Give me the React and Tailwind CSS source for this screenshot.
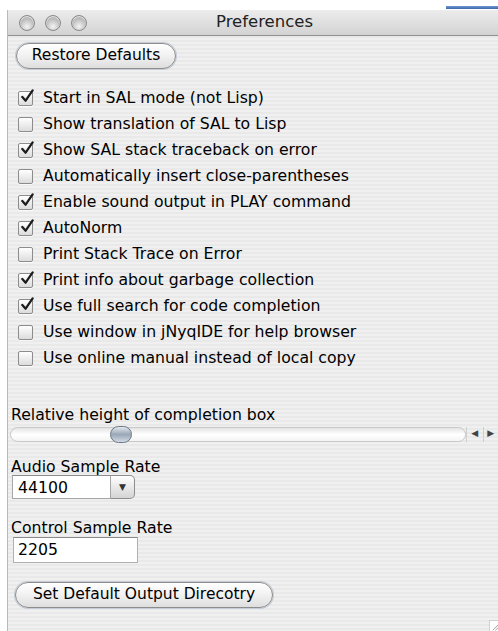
import React, { useState } from "react";

const options = [
  { label: "Start in SAL mode (not Lisp)", on: true },
  { label: "Show translation of SAL to Lisp", on: false },
  { label: "Show SAL stack traceback on error", on: true },
  { label: "Automatically insert close-parentheses", on: false },
  { label: "Enable sound output in PLAY command", on: true },
  { label: "AutoNorm", on: true },
  { label: "Print Stack Trace on Error", on: false },
  { label: "Print info about garbage collection", on: true },
  { label: "Use full search for code completion", on: true },
  { label: "Use window in jNyqIDE for help browser", on: false },
  { label: "Use online manual instead of local copy", on: false },
];

const TrafficLight = () => (
  <span className="block w-4 h-4 rounded-full border border-[#8a8a8a] bg-[radial-gradient(circle_at_50%_75%,#f4f4f4_0%,#c9c9c9_45%,#9c9c9c_100%)] shadow-[inset_0_1px_1px_rgba(255,255,255,0.8)]" />
);

const Checkbox = ({ checked, onChange }) => (
  <button
    onClick={onChange}
    className="relative w-[15px] h-[15px] shrink-0 rounded-[2px] border border-[#8c8c8c] bg-gradient-to-b from-[#ffffff] to-[#dcdcdc] shadow-[0_1px_0_rgba(255,255,255,0.7)]"
  >
    {checked && (
      <svg
        viewBox="0 0 16 16"
        className="absolute -top-[3px] left-[1px] w-[15px] h-[15px]"
      >
        <path
          d="M2.5 8.5 L6 12.5 L13.5 1.5"
          fill="none"
          stroke="#1c1c1c"
          strokeWidth="2.4"
          strokeLinecap="round"
          strokeLinejoin="round"
        />
      </svg>
    )}
  </button>
);

const PillButton = ({ children, className = "" }) => (
  <button
    className={`h-[26px] rounded-full border border-[#8d8d8d] bg-gradient-to-b from-[#ffffff] via-[#f1f1f1] to-[#dedede] shadow-[0_0_0_1px_#c4ccd6] text-[15.5px] text-black ${className}`}
  >
    {children}
  </button>
);

export default function App() {
  const [checks, setChecks] = useState(options.map((o) => o.on));

  const toggle = (i) =>
    setChecks((prev) => prev.map((v, j) => (j === i ? !v : v)));

  return (
    <div className="w-[498px] h-[631px] bg-white flex flex-col font-['DejaVu_Sans',sans-serif] text-black overflow-hidden">
      <div className="h-[10px] flex justify-end items-start pt-[6px]">
        <div className="w-[52px] h-[3px] bg-gradient-to-b from-[#6f95d0] to-[#3d66ab]" />
      </div>

      <div className="flex-1 ml-[7px] flex flex-col border-l border-[#b9b9b9] bg-[repeating-linear-gradient(180deg,#f0f0f0_0px,#f0f0f0_2px,#e9e9e9_2px,#e9e9e9_4px)]">
        {/* title bar */}
        <div className="h-[26px] flex items-center border-b border-[#8f8f8f] bg-gradient-to-b from-[#ececec] to-[#d3d3d3]">
          <div className="flex gap-[10px] pl-[11px]">
            <TrafficLight />
            <TrafficLight />
            <TrafficLight />
          </div>
          <span className="ml-[129px] text-[16.5px] text-[#222]">Preferences</span>
        </div>

        <div className="pl-[8px] pt-[7px]">
          <PillButton className="w-[160px]">Restore Defaults</PillButton>
        </div>

        <ul className="mt-[16px] pl-[10px] flex flex-col">
          {options.map((o, i) => (
            <li key={o.label} className="h-[26px] flex items-center gap-[10px]">
              <Checkbox checked={checks[i]} onChange={() => toggle(i)} />
              <span className="text-[15.7px] leading-none">{o.label}</span>
            </li>
          ))}
        </ul>

        <div className="mt-[36px] pl-[3px] text-[15.7px] leading-none">
          Relative height of completion box
        </div>

        {/* slider with stepper arrows */}
        <div className="mt-[4px] flex items-center">
          <div className="relative flex-1 h-[15px] ml-[2px] rounded-full border border-[#c8c8c8] bg-gradient-to-b from-[#e4e4e4] via-[#ffffff] to-[#f4f4f4]">
            <span className="absolute left-[99px] -top-[2px] w-[22px] h-[17px] rounded-full border border-[#6b7786] bg-gradient-to-b from-[#e3e8ee] via-[#9aa7b6] to-[#d3dbe4]" />
          </div>
          <div className="w-[32px] h-[15px] flex items-center text-[9px] text-[#444] border-l border-[#cfcfcf]">
            <span className="w-[16px] text-center">◀</span>
            <span className="w-[1px] h-[15px] bg-[#cfcfcf]" />
            <span className="w-[15px] text-center">▶</span>
          </div>
        </div>

        <div className="mt-[17px] pl-[3px] text-[15.7px] leading-none">Audio Sample Rate</div>
        <div className="mt-[1px] ml-[4px] flex items-center w-[123px] h-[24px]">
          <div className="flex-1 h-full flex items-center pl-[5px] bg-white border border-[#a6a6a6] border-t-[#8a8a8a] text-[15.7px]">
            44100
          </div>
          <div className="w-[24px] h-full flex items-center justify-center rounded-r-[5px] border border-l-0 border-[#8d8d8d] bg-gradient-to-b from-[#ffffff] to-[#d4d4d4]">
            <span className="text-[9px] text-[#333]">▼</span>
          </div>
        </div>

        <div className="mt-[21px] pl-[3px] text-[15.7px] leading-none">Control Sample Rate</div>
        <div className="mt-[1px] ml-[5px] w-[125px] h-[26px] flex items-center pl-[4px] bg-white border border-[#b0b0b0] border-t-[#8a8a8a] text-[15.7px]">
          2205
        </div>

        <div className="mt-[19px] pl-[7px]">
          <PillButton className="w-[258px]">Set Default Output Direcotry</PillButton>
        </div>

        {/* resize grip */}
        <div className="mt-auto flex justify-end">
          <div className="w-[9px] h-[11px] bg-white border-l border-t border-[#d0d0d0] flex items-end justify-end">
            <svg viewBox="0 0 9 11" className="w-[9px] h-[11px]">
              <path d="M3 11 L9 5 M6 11 L9 8" stroke="#9a9a9a" strokeWidth="1" />
            </svg>
          </div>
        </div>
      </div>
    </div>
  );
}
